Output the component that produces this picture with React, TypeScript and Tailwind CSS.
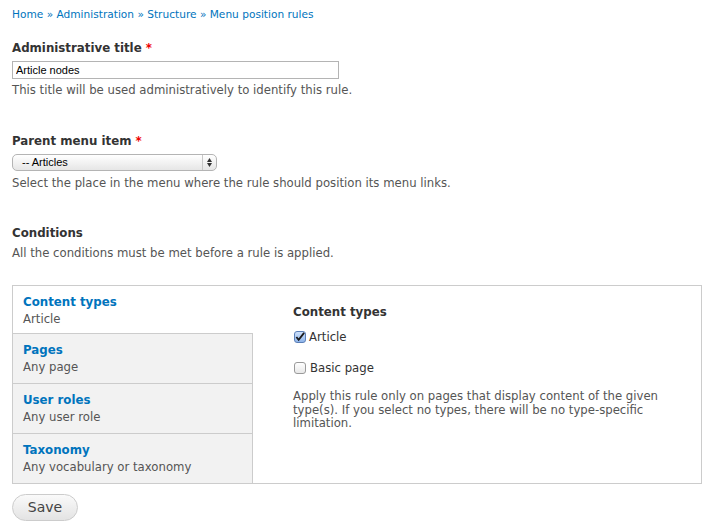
import React from "react";

const font = { fontFamily: "'DejaVu Sans', Verdana, sans-serif" };

const tabs = [
    { title: "Content types", summary: "Article" },
    { title: "Pages", summary: "Any page" },
    { title: "User roles", summary: "Any user role" },
    { title: "Taxonomy", summary: "Any vocabulary or taxonomy" },
];

const Required = () => <span className="text-[#e00] font-bold ml-1">*</span>;

export default function App() {
    return (
        <div className="w-[715px] h-[532px] bg-white text-[#333] text-[11.7px] px-3 pt-[7px]" style={font}>
            {/* breadcrumb */}
            <div className="text-[#0074bd] text-[10.6px] leading-[14px]">
                Home » Administration » Structure » Menu position rules
            </div>

            <div className="mt-[19px]">
                <label className="block font-bold text-[11.8px] leading-[16px]">
                    Administrative title<Required />
                </label>
                <input
                    type="text"
                    defaultValue="Article nodes"
                    className="mt-[5px] block w-[327px] h-[18px] border border-[#b4b4b4] px-[3px] text-[11px] text-black outline-none"
                    style={{ fontFamily: "'Liberation Sans', Arial, sans-serif" }}
                />
                <p className="mt-[4px] leading-[14px] text-[#555]">
                    This title will be used administratively to identify this rule.
                </p>
            </div>

            <div className="mt-[36px]">
                <label className="block font-bold text-[11.8px] leading-[16px]">
                    Parent menu item<Required />
                </label>
                <div
                    className="mt-[5px] w-[205px] h-[17px] rounded-[5px] border border-[#b4b4b4] bg-gradient-to-b from-white to-[#e6e6e6] flex items-center text-[11px] text-black"
                    style={{ fontFamily: "'Liberation Sans', Arial, sans-serif" }}
                >
                    <span className="flex-1 pl-[9px]">-- Articles</span>
                    <span className="w-[14px] h-full border-l border-[#c8c8c8] flex flex-col items-center justify-center gap-[1px]">
                        <svg width="5" height="4" viewBox="0 0 5 4"><path d="M0 4 L2.5 0 L5 4Z" fill="#333" /></svg>
                        <svg width="5" height="4" viewBox="0 0 5 4"><path d="M0 0 L2.5 4 L5 0Z" fill="#333" /></svg>
                    </span>
                </div>
                <p className="mt-[5px] leading-[14px] text-[#555]">
                    Select the place in the menu where the rule should position its menu links.
                </p>
            </div>

            <div className="mt-[35px]">
                <h2 className="font-bold text-[11.8px] leading-[16px]">Conditions</h2>
                <p className="mt-[5px] leading-[14px] text-[#555]">
                    All the conditions must be met before a rule is applied.
                </p>
            </div>

            {/* vertical tabs */}
            <div className="mt-[25px] w-[690px] h-[199px] border border-[#ccc] flex">
                <ul className="w-[240px] shrink-0 flex flex-col">
                    {tabs.map((t, i) => (
                        <li
                            key={t.title}
                            className={
                                i === 0
                                    ? "h-[47px] bg-white pl-[10px] pt-[8px] border-r border-transparent"
                                    : i === 3
                                      ? "flex-1 bg-[#f2f2f2] pl-[10px] pt-[8px] border-t border-r border-[#ccc]"
                                      : "h-[50px] bg-[#f2f2f2] pl-[10px] pt-[8px] border-t border-r border-[#ccc]"
                            }
                        >
                            <div className="text-[#0074bd] font-bold text-[11.8px] leading-[16px]">{t.title}</div>
                            <div className="leading-[18px] text-[#555]">{t.summary}</div>
                        </li>
                    ))}
                </ul>
                <div className="flex-1 pl-[40px] pt-[18px]">
                    <h3 className="font-bold text-[11.8px] leading-[16px]">Content types</h3>
                    <label className="mt-[10px] flex items-center leading-[14px]">
                        <span className="w-[12px] h-[12px] rounded-[3px] border border-[#5b7fb8] bg-gradient-to-b from-[#cfe2fb] to-[#8fb5ea] flex items-center justify-center ml-[1px] mr-[3px]">
                            <svg width="11" height="10" viewBox="0 0 11 10"><path d="M1.5 5 L4 8 L10 0.5" stroke="#1b1b1b" strokeWidth="2" fill="none" /></svg>
                        </span>
                        Article
                    </label>
                    <label className="mt-[17px] flex items-center leading-[14px]">
                        <span className="w-[12px] h-[12px] rounded-[3px] border border-[#9a9a9a] bg-gradient-to-b from-white to-[#e8e8e8] ml-[1px] mr-[4px]" />
                        Basic page
                    </label>
                    <p className="mt-[15px] leading-[13.5px] text-[#555] w-[378px]">
                        Apply this rule only on pages that display content of the given type(s). If you select no types, there will be no type-specific limitation.
                    </p>
                </div>
            </div>

            <button className="mt-[10px] w-[66px] h-[27px] rounded-full border border-[#ccc] bg-gradient-to-b from-[#fafafa] to-[#e3e3e3] text-[14px] text-[#444]">
                Save
            </button>
        </div>
    );
}
